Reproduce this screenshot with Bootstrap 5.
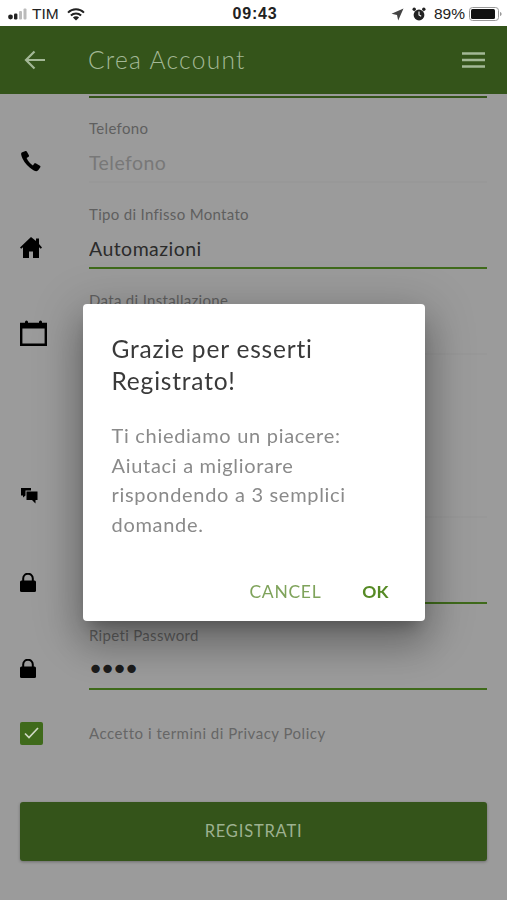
<!doctype html>
<html lang="it">
<head>
    <meta charset="utf-8" />
    <meta content="width=device-width, initial-scale=1" name="viewport" />
    <title>Crea Account</title>
    <link href="https://cdn.jsdelivr.net/npm/bootstrap@5.3.6/dist/css/bootstrap.min.css" rel="stylesheet" />
    <style>
        html, body {
            height: 900px;
            overflow: hidden;
        }

        body {
            background-color: #9b9b9b;
            font-family: Lato, "Liberation Sans", sans-serif;
        }

        .status-bar {
            height: 26px;
            padding: 2px 5px 0 8px;
            background-color: #fff;
            color: #222;
            font-family: "Liberation Sans", Arial, sans-serif;
            font-size: 15.5px;
        }

        .status-side {
            width: 190px;
        }

        .status-time {
            font-weight: 700;
            font-size: 16px;
            letter-spacing: .8px;
        }

        .app-bar {
            height: 68px;
            padding: 0 22px 0 24px;
            background-color: #34541a;
            color: #a3b896;
        }

        .app-title {
            margin: 0 0 0 42px;
            font-size: 24.5px;
            font-weight: 300;
            letter-spacing: 1.3px;
        }

        .top-line {
            height: 2px;
            margin: 2px 20px 0 89px;
            background-color: #34541a;
        }

        .form-area {
            padding: 20px 20px 0;
        }

        .field-row {
            margin-bottom: 21px;
        }

        .field-icon {
            width: 69px;
            height: 28px;
            margin-bottom: 8px;
            flex-shrink: 0;
        }

        .field-box {
            border-bottom: 2px solid #989898;
            padding-bottom: 3px;
        }

        .field-box.active-line {
            border-bottom-color: #3f6a1b;
        }

        .field-label {
            display: block;
            height: 20px;
            margin: 0 0 8px;
            color: #5f5f5f;
            font-size: 15px;
            line-height: 20px;
            letter-spacing: .32px;
        }

        .field-input.form-control {
            height: 32px;
            padding: 0;
            border: 0;
            border-radius: 0;
            background: transparent;
            box-shadow: none;
            color: #2b2b2b;
            font-size: 19.5px;
            letter-spacing: .45px;
        }

        .field-input.form-control::placeholder {
            color: #787878;
            opacity: 1;
        }

        .field-input.form-control.dots {
            font-family: "DejaVu Sans", sans-serif;
            font-size: 29px;
            line-height: 30px;
            margin-left: -2px;
            letter-spacing: -5.100px;
            color: #1c1c1c;
        }

        .field-tall {
            height: 137px;
        }

        .check-row {
            height: 44px;
        }

        .check-box {
            width: 23px;
            height: 23px;
            border-radius: 2px;
            background-color: #3f6a1b;
        }

        .check-col {
            width: 69px;
        }

        .check-text {
            color: #666;
            font-size: 15px;
            letter-spacing: .5px;
        }

        .btn-register.btn {
            height: 59px;
            margin-top: 47px;
            border: 0;
            border-radius: 3px;
            background-color: #34541a;
            color: #9db190;
            font-size: 16.5px;
            letter-spacing: .8px;
            box-shadow: 0 1px 3px rgba(0, 0, 0, .3);
        }

        .modal.thanks-modal {
            top: 25px;
            height: 875px;
        }

        .thanks-modal .modal-dialog {
            width: 342px;
            max-width: 342px;
            margin: 0 auto;
            min-height: 100%;
        }

        .thanks-modal .modal-content {
            height: 317px;
            padding: 29px 30px 0 29px;
            border: 0;
            border-radius: 4px;
            box-shadow: 0 11px 15px -7px rgba(0, 0, 0, .25), 0 24px 38px 3px rgba(0, 0, 0, .2), 0 9px 46px 8px rgba(0, 0, 0, .18);
        }

        .thanks-title {
            margin: 0 0 24px;
            color: #3a3a3a;
            font-size: 24.5px;
            font-weight: 400;
            line-height: 32px;
            letter-spacing: .8px;
        }

        .thanks-text {
            margin: 0;
            color: #8a8a8a;
            font-size: 20px;
            line-height: 29.6px;
            letter-spacing: .7px;
        }

        .thanks-actions {
            position: absolute;
            right: 36px;
            bottom: 16px;
        }

        .thanks-actions .btn {
            padding: 0;
            border: 0;
            color: #7fa35b;
            font-size: 17.5px;
            letter-spacing: .7px;
        }

        .thanks-actions .btn-ok {
            margin-left: 41px;
            color: #568a25;
            font-weight: 700;
            letter-spacing: 0;
        }
    </style>
</head>
<body>

<div class="status-bar d-flex align-items-center justify-content-between">
    <div class="status-side d-flex align-items-center">
        <svg width="20" height="12" viewBox="0 0 20 12" class="me-1">
            <circle cx="2.5" cy="9" r="2.4" fill="#222"/>
            <rect x="6" y="5.5" width="3.4" height="6" rx="1.2" fill="#222"/>
            <rect x="11" y="3" width="3" height="8.5" rx="1" fill="#bbb"/>
            <rect x="15.5" y="0.5" width="3" height="11" rx="1" fill="#bbb"/>
        </svg>
        <span>TIM</span>
        <svg width="18" height="13" viewBox="0 0 18 13" class="ms-2">
            <path d="M1 4.6a11.4 11.4 0 0 1 16 0" fill="none" stroke="#222" stroke-width="2"/>
            <path d="M3.9 7.5a7.3 7.3 0 0 1 10.2 0" fill="none" stroke="#222" stroke-width="2"/>
            <path d="M9 12.6 5.9 9.6a4.4 4.4 0 0 1 6.2 0z" fill="#222"/>
        </svg>
    </div>
    <span class="status-time">09:43</span>
    <div class="status-side d-flex align-items-center justify-content-end">
        <svg width="13" height="13" viewBox="0 0 13 13" class="me-2">
            <path d="M12.5.5 7.2 12.5 6 7 .5 5.8z" fill="#444"/>
        </svg>
        <svg width="14" height="14" viewBox="0 0 14 14" class="me-1">
            <circle cx="7" cy="8" r="5.4" fill="#222"/>
            <circle cx="2.2" cy="2.2" r="1.7" fill="#222"/>
            <circle cx="11.8" cy="2.2" r="1.7" fill="#222"/>
            <path d="M7 4.6V8l2.2 1.2" fill="none" stroke="#fff" stroke-width="1.1"/>
        </svg>
        <span class="ms-1">89%</span>
        <svg width="33" height="14" viewBox="0 0 33 14" class="ms-1">
            <rect x=".5" y=".5" width="29" height="13" rx="3" fill="none" stroke="#999"/>
            <rect x="2" y="2" width="24" height="10" rx="1.5" fill="#111"/>
            <path d="M31 5v4c1-.3 1.6-1 1.6-2S32 5.300 31 5z" fill="#999"/>
        </svg>
    </div>
</div>

<header class="app-bar d-flex align-items-center">
    <svg width="22" height="20" viewBox="0 0 22 20">
        <path d="M21 10H2M10.500 1.500 2 10l8.500 8.500" fill="none" stroke="#a3b896" stroke-width="2.200"/>
    </svg>
    <h1 class="app-title flex-grow-1">Crea Account</h1>
    <svg width="23" height="16" viewBox="0 0 23 16">
        <path d="M0 1.500h23M0 8h23M0 14.500h23" fill="none" stroke="#a3b896" stroke-width="2.400"/>
    </svg>
</header>

<div class="top-line"></div>

<form class="form-area">
    <div class="field-row d-flex align-items-end">
        <div class="field-icon d-flex align-items-center">
            <svg width="22" height="22" viewBox="0 0 22 22">
                <path d="M5.500 1 1.700 2.600C.7 3.200 1 5.500 2.500 8.600c2.300 4.700 6 8.900 10.900 11.600 2.400 1.300 4.100 1.300 5-.1l1.900-2.900c.4-.6.200-1.100-.4-1.500l-4.200-2.400c-.5-.3-1.100-.2-1.400.2l-1.400 1.900c-2.600-1.500-5-4.200-6.300-7.300l2-1.300c.4-.3.600-.8.400-1.300L6.800 1.500C6.500 1 6 .8 5.500 1z" fill="#000"/>
            </svg>
        </div>
        <div class="field-box flex-grow-1">
            <label class="field-label" for="telefono">Telefono</label>
            <input class="field-input form-control" id="telefono" placeholder="Telefono" type="text" />
        </div>
    </div>

    <div class="field-row d-flex align-items-end">
        <div class="field-icon d-flex align-items-center">
            <svg width="22" height="21" viewBox="0 0 22 21">
                <path d="M11 0 0 10.500l1.200 1.300L3 10.200V21h6v-6.500h4V21h6V10.200l1.800 1.600 1.200-1.300L19 6.900V1.500h-3v2.600z" fill="#000"/>
            </svg>
        </div>
        <div class="field-box active-line flex-grow-1">
            <label class="field-label" for="infisso">Tipo di Infisso Montato</label>
            <input class="field-input form-control" id="infisso" type="text" value="Automazioni" />
        </div>
    </div>

    <div class="field-row d-flex align-items-end">
        <div class="field-icon d-flex align-items-center">
            <svg width="27" height="26" viewBox="0 0 27 26">
                <path d="M1.200 4h24.600v20.800H1.200z" fill="none" stroke="#000" stroke-width="2.400"/>
                <path d="M1 4h25v4.500H1z" fill="#000"/>
                <rect x="5" y="0.500" width="3" height="6" rx="1.500" fill="#000"/>
                <rect x="19" y="0.500" width="3" height="6" rx="1.500" fill="#000"/>
            </svg>
        </div>
        <div class="field-box flex-grow-1">
            <label class="field-label" for="installazione">Data di Installazione</label>
            <input class="field-input form-control" id="installazione" type="text" />
        </div>
    </div>

    <div class="field-row d-flex align-items-end">
        <div class="field-icon d-flex align-items-center">
            <svg width="18" height="16" viewBox="0 0 18 16">
                <path d="M1 0h10v2.500H5.500v5L3 9.500v-2H1z" fill="#000"/>
                <path d="M6.500 3.500H17.500V12H15.500v3.500L12 12H6.500z" fill="#000"/>
            </svg>
        </div>
        <div class="field-box flex-grow-1">
            <div class="field-tall"></div>
        </div>
    </div>

    <div class="field-row d-flex align-items-end">
        <div class="field-icon d-flex align-items-center">
            <svg width="16" height="19" viewBox="0 0 16 19">
                <path d="M3.200 8V5.500a4.800 4.800 0 0 1 9.600 0V8" fill="none" stroke="#000" stroke-width="2"/>
                <rect y="7.500" width="16" height="11.500" rx="1.500" fill="#000"/>
            </svg>
        </div>
        <div class="field-box active-line flex-grow-1">
            <label class="field-label" for="password">Password</label>
            <input class="field-input dots form-control" id="password" type="password" value="1234" />
        </div>
    </div>

    <div class="field-row d-flex align-items-end">
        <div class="field-icon d-flex align-items-center">
            <svg width="16" height="19" viewBox="0 0 16 19">
                <path d="M3.200 8V5.500a4.800 4.800 0 0 1 9.600 0V8" fill="none" stroke="#000" stroke-width="2"/>
                <rect y="7.500" width="16" height="11.500" rx="1.500" fill="#000"/>
            </svg>
        </div>
        <div class="field-box active-line flex-grow-1">
            <label class="field-label" for="ripeti">Ripeti Password</label>
            <input class="field-input dots form-control" id="ripeti" type="password" value="1234" />
        </div>
    </div>

    <div class="check-row d-flex align-items-center">
        <div class="check-col">
            <div class="check-box d-flex align-items-center justify-content-center">
                <svg width="15" height="12" viewBox="0 0 15 12">
                    <path d="M1 6.500 5 10.500 14 1" fill="none" stroke="#cfd8c4" stroke-width="1.700"/>
                </svg>
            </div>
        </div>
        <span class="check-text">Accetto i termini di Privacy Policy</span>
    </div>

    <button class="btn btn-register w-100" type="button">REGISTRATI</button>
</form>

<div class="modal thanks-modal d-block" tabindex="-1">
    <div class="modal-dialog modal-dialog-centered">
        <div class="modal-content">
            <h2 class="thanks-title">Grazie per esserti Registrato!</h2>
            <p class="thanks-text">Ti chiediamo un piacere: Aiutaci a migliorare rispondendo a 3 semplici domande.</p>
            <div class="thanks-actions d-flex">
                <button class="btn" type="button">CANCEL</button>
                <button class="btn btn-ok" type="button">OK</button>
            </div>
        </div>
    </div>
</div>

<script src="https://cdn.jsdelivr.net/npm/bootstrap@5.3.6/dist/js/bootstrap.bundle.min.js"></script>
</body>
</html>
